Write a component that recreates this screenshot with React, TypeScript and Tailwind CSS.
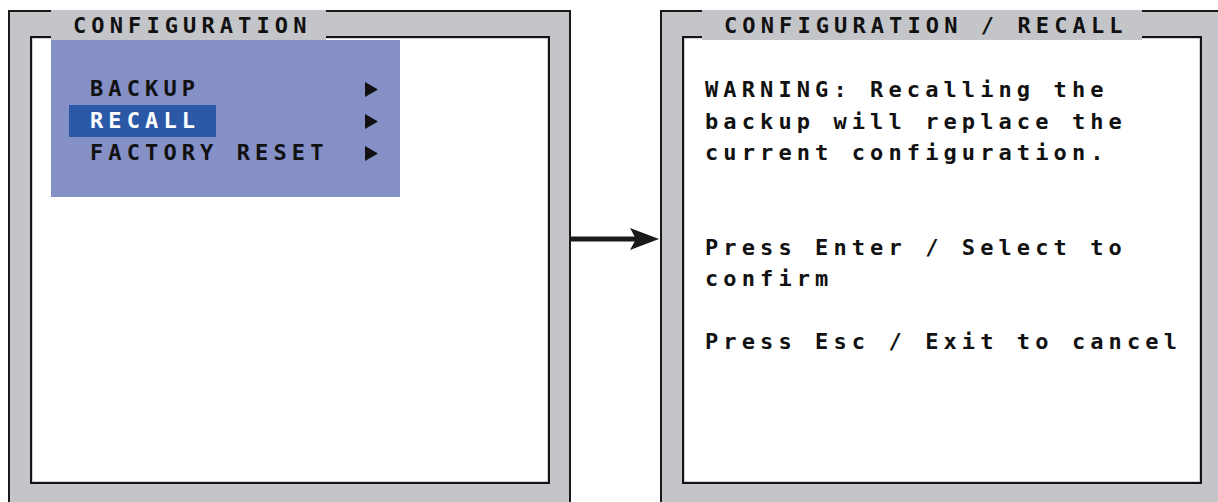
const mono = "font-['DejaVu_Sans_Mono',monospace] font-bold text-[22px] tracking-[5.1px] text-[#111]"

function Triangle() {
  return (
    <svg width="13" height="15" viewBox="0 0 13 15" className="shrink-0">
      <path d="M0 0 L13 7.5 L0 15 Z" fill="#111" />
    </svg>
  )
}

function Frame({ title, titleWidth, titleLeft, children }: { title: string; titleWidth: string; titleLeft: string; children: React.ReactNode }) {
  return (
    <div className="relative shrink-0 w-[563px] h-[520px] border-2 border-[#1a1a1a] bg-[#c4c5c9] pl-[20px] pr-[19px] pt-[24px]">
      {/* Inner white screen */}
      <div className="h-[448px] border-2 border-[#141414] bg-white shadow-[inset_0_0_0_1px_#cfd0d4]">
        {children}
      </div>
      {/* Title tab over the border */}
      <div className={`absolute top-[-2px] h-[30px] bg-[#c4c5c9] pl-[22px] ${titleLeft} ${titleWidth}`}>
        <span className={`${mono} leading-[32px] whitespace-pre`}>{title}</span>
      </div>
    </div>
  )
}

const menuItems = [
  { label: 'BACKUP', active: false },
  { label: 'RECALL', active: true },
  { label: 'FACTORY RESET', active: false },
]

export default function App() {
  return (
    <div className="w-[1218px] h-[502px] overflow-hidden bg-white flex pl-[8px] pt-[10px]">
      <Frame title="CONFIGURATION" titleLeft="left-[41px]" titleWidth="w-[275px]">
        <div className="ml-[19px] mt-[2px] w-[349px] h-[157px] bg-[#8490c6] pt-[33px]">
          {menuItems.map((item) => (
            <div key={item.label} className="h-[32px] flex items-center">
              <div
                className={`ml-[18px] h-[32px] pl-[21px] flex items-center ${
                  item.active ? 'bg-[#2b59a8] w-[147px]' : ''
                }`}
              >
                <span className={`${mono} leading-[32px] whitespace-pre ${item.active ? 'text-white' : ''}`}>
                  {item.label}
                </span>
              </div>
              <div className="ml-auto mr-[22px]">
                <Triangle />
              </div>
            </div>
          ))}
        </div>
      </Frame>

      {/* Arrow between screens */}
      <svg width="89" height="40" viewBox="0 0 89 40" className="shrink-0 mt-[209px]">
        <rect x="0" y="17.5" width="67" height="5" fill="#1a1a1a" />
        <path d="M59 9 L88 20 L59 31 L65 20 Z" fill="#1a1a1a" />
      </svg>

      <Frame title="CONFIGURATION / RECALL" titleLeft="left-[40px]" titleWidth="w-[440px]">
        <div className={`${mono} leading-[31.5px] whitespace-pre pl-[21px] pt-[36px]`}>
          <div>WARNING: Recalling the</div>
          <div>backup will replace the</div>
          <div>current configuration.</div>
          <div>&nbsp;</div>
          <div>&nbsp;</div>
          <div>Press Enter / Select to</div>
          <div>confirm</div>
          <div>&nbsp;</div>
          <div>Press Esc / Exit to cancel</div>
        </div>
      </Frame>
    </div>
  )
}
